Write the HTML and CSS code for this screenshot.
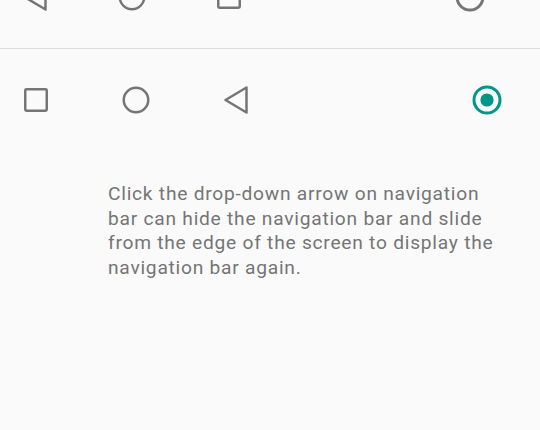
FILE: index.html
```html
<!DOCTYPE html>
<html lang="en-US">
    <head>
        <meta charset="utf-8">
        <title>Navigation bar</title>
        <meta name="viewport" content="width=device-width,initial-scale=1">
        <link rel="stylesheet" href="styles.css">
    </head>
    <body>
        <main class="screen">
            <div class="nav-option top">
                <svg class="icon" viewBox="0 0 30 30"><path class="line" d="M25.5 2.5 L4.5 15 L25.5 27.5 Z"/></svg>
                <svg class="icon" viewBox="0 0 30 30"><circle class="line" cx="15" cy="15" r="12.25"/></svg>
                <svg class="icon" viewBox="0 0 30 30"><rect class="line" x="4.25" y="4.25" width="21.5" height="21.5" rx="1.2"/></svg>
                <svg class="icon radio" viewBox="0 0 30 30"><circle class="line ring" cx="15" cy="15" r="13"/></svg>
            </div>

            <div class="nav-option">
                <svg class="icon" viewBox="0 0 30 30"><rect class="line" x="4.25" y="4.25" width="21.5" height="21.5" rx="1.2"/></svg>
                <svg class="icon" viewBox="0 0 30 30"><circle class="line" cx="15" cy="15" r="12.25"/></svg>
                <svg class="icon" viewBox="0 0 30 30"><path class="line" d="M25.5 2.5 L4.5 15 L25.5 27.5 Z"/></svg>
                <svg class="icon radio" viewBox="0 0 30 30">
                    <circle class="checked ring" cx="15" cy="15" r="13"/>
                    <circle class="dot" cx="15" cy="15" r="6.6"/>
                </svg>
            </div>

            <p class="hint">Click the drop-down arrow on navigation bar can hide the navigation bar and slide from the edge of the screen to display the navigation bar again.</p>
        </main>
    </body>
</html>
```

FILE: styles.css
```css
html, body {
    margin: 0;
    padding: 0;
    background-color: #fafafa;
}
body {
    width: 540px;
    height: 430px;
    overflow: hidden;
    font-family: Roboto, "Noto Sans", sans-serif;
}

.nav-option {
    display: flex;
    align-items: center;
    height: 102px;
    padding: 0 38px 0 21px;
}
.nav-option .icon + .icon {
    margin-left: 70px;
}
.nav-option .icon.radio {
    margin-left: auto;
}
.nav-option.top {
    margin-top: -54px;
    height: 102px;
    padding: 0 55px 0 20px;
    border-bottom: 1.5px solid #dcdcdc;
}
.nav-option.top .icon + .icon {
    margin-left: 67px;
}
.nav-option.top .icon.radio {
    margin-left: auto;
}

.icon {
    width: 30px;
    height: 30px;
    flex: none;
}
.line {
    fill: none;
    stroke: #757575;
    stroke-width: 2.5;
    stroke-linejoin: round;
}
.ring {
    stroke-width: 3;
}
.checked {
    fill: none;
    stroke: #009688;
}
.dot {
    fill: #009688;
}

.hint {
    margin: 31px 34px 0 108px;
    font-size: 19.2px;
    letter-spacing: 0.75px;
    line-height: 24.5px;
    color: #757575;
}
```
